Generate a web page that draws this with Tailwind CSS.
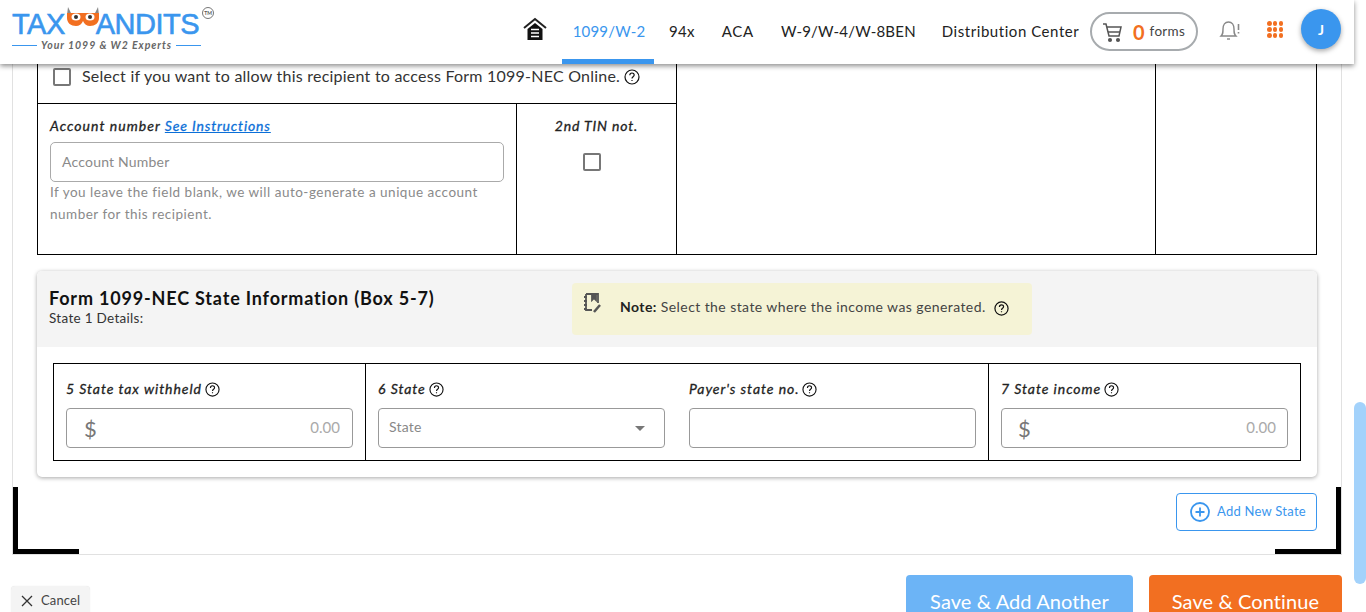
<!doctype html>
<html><head><meta charset="utf-8"><script src="https://cdn.jsdelivr.net/npm/@tailwindcss/browser@4"></script></head>
<body class="m-0 bg-white">
<div class="relative w-[1366px] h-[612px] overflow-hidden bg-white font-['Lato',sans-serif] text-[#222]">
  <!-- header -->
  <header class="absolute top-0 left-0 w-[1354px] h-[64px] bg-white z-10 shadow-[0_2px_5px_rgba(0,0,0,0.45)] flex items-center">
    <div class="relative w-[240px] h-[64px] shrink-0">
      <div class="absolute left-[12px] top-[11px] font-['Liberation_Sans',sans-serif] text-[29px] leading-[26px] text-[#3a96ee] flex tracking-[-0.5px] [-webkit-text-stroke:0.6px_#3a96ee]"><span>TAX</span><span class="w-[31px]"></span><span>ANDITS</span></div>
      <svg class="absolute left-[65px] top-[6px]" width="36" height="22" viewBox="0 0 36 22"><path d="M3 1l3 6h24l3-6 1 8H2z" fill="#888"/><path d="M2 7h32v5c0 5-4 8-9 8-3 0-6-2-7-5-1 3-4 5-7 5-5 0-9-3-9-8z" fill="#f26f21"/><ellipse cx="11" cy="11" rx="4.500" ry="3.500" fill="#fff"/><ellipse cx="25" cy="11" rx="4.500" ry="3.500" fill="#fff"/><circle cx="11" cy="11" r="2" fill="#333"/><circle cx="25" cy="11" r="2" fill="#333"/></svg>
      <div class="absolute left-[202px] top-[7px] w-[12px] h-[12px] rounded-full border border-[#777] text-[5px] leading-[10px] text-center font-bold text-[#555]">TM</div>
      <div class="absolute left-[12px] top-[38px] w-[189px] flex items-center justify-between">
        <span class="h-px w-[25px] bg-[#3a96ee]"></span>
        <span class="text-[10.5px] leading-[14px] italic font-bold tracking-[0.95px] text-[#666] whitespace-nowrap">Your 1099 &amp; W2 Experts</span>
        <span class="h-px w-[25px] bg-[#3a96ee]"></span>
      </div>
    </div>
    <div class="absolute left-[523px] top-[17px]">
      <svg width="24" height="24" viewBox="0 0 24 24"><path d="M1 11L12 2l11 9" fill="none" stroke="#222" stroke-width="2"/><path d="M4.500 12l7.500-6 7.500 6v11h-15z" fill="#111"/><path d="M8 12.500h8M8 16h8M8 19.500h8" stroke="#fff" stroke-width="1.400"/></svg>
    </div>
    <nav class="absolute left-[562px] top-0 h-[64px] flex text-[15px] tracking-[0.2px] whitespace-nowrap">
      <a class="w-[92px] h-[64px] flex items-center justify-center pt-[4px] pl-[2px] text-[#3a96ee] border-b-[5px] border-[#3a96ee]">1099/W-2</a>
      <a class="ml-[15px] h-[64px] flex items-center pb-[1px] tracking-[0.3px]">94x</a>
      <a class="ml-[27px] h-[64px] flex items-center pb-[1px] tracking-[0.7px]">ACA</a>
      <a class="ml-[27px] h-[64px] flex items-center pb-[1px] tracking-[0.2px]">W-9/W-4/W-8BEN</a>
      <a class="ml-[26px] h-[64px] flex items-center pb-[1px] tracking-[0.55px]">Distribution Center</a>
    </nav>
    <div class="absolute left-[1090px] top-[12px] w-[108px] h-[39px] rounded-full border-2 border-[#a7abae] flex items-center pl-[10px]">
      <svg width="22" height="22" viewBox="0 0 22 22" fill="none" stroke="#555" stroke-width="1.500"><path d="M1 3h3l3 12h10l2-9H5"/><path d="M6 11h12" /><circle cx="8" cy="19" r="1.300" fill="#555"/><circle cx="16" cy="19" r="1.300" fill="#555"/></svg>
      <span class="ml-[9px] text-[20px] font-bold text-[#f26f21] leading-none">0</span>
      <span class="ml-[5px] text-[13.500px] text-[#444] tracking-[0.3px]">forms</span>
    </div>
    <svg class="absolute left-[1219px] top-[19px]" width="22" height="22" viewBox="0 0 22 22" fill="none" stroke="#888" stroke-width="1.400"><path d="M2 17c2-2 2-3 2-7s2-7 5.500-7S15 6 15 10s0 5 2 7z"/><path d="M8 20h3"/><path d="M19.500 5v6M19.500 13v1.500" stroke-width="1.600"/></svg>
    <div class="absolute left-[1267px] top-[21px] w-[16px] grid grid-cols-3 gap-[1.500px]">
      <i class="w-[4.500px] h-[4.500px] rounded-full bg-[#f26f21]"></i><i class="w-[4.500px] h-[4.500px] rounded-full bg-[#f26f21]"></i><i class="w-[4.500px] h-[4.500px] rounded-full bg-[#f26f21]"></i>
      <i class="w-[4.500px] h-[4.500px] rounded-full bg-[#f26f21]"></i><i class="w-[4.500px] h-[4.500px] rounded-full bg-[#f26f21]"></i><i class="w-[4.500px] h-[4.500px] rounded-full bg-[#f26f21]"></i>
      <i class="w-[4.500px] h-[4.500px] rounded-full bg-[#f26f21]"></i><i class="w-[4.500px] h-[4.500px] rounded-full bg-[#f26f21]"></i><i class="w-[4.500px] h-[4.500px] rounded-full bg-[#f26f21]"></i>
    </div>
    <div class="absolute left-[1301px] top-[9px] w-[40px] h-[40px] rounded-full bg-[#3a96ee] shadow-[0_2px_5px_rgba(0,0,0,0.35)] text-white text-[14px] font-bold flex items-center justify-center">J</div>
  </header>

  <!-- scrollbar -->
  <div class="absolute left-[1354px] top-[402px] w-[12px] h-[182px] rounded-[6px] bg-[#a3d2fb]"></div>

  <!-- card frame -->
  <main class="absolute left-[12px] top-0 w-[1330px] h-[555px] border-x border-b border-[#e1e1e1] pt-[64px] pl-[24px] pr-[24px]">
    <!-- top table -->
    <div class="grid grid-cols-[640px_478px_162px] h-[191px] border-b border-black">
      <div class="border-x border-black flex flex-col">
        <div class="h-[40px] border-b border-black flex items-center pl-[15px] pb-[13px]">
          <span class="w-[18px] h-[18px] rounded-[2px] border-2 border-[#777] shrink-0"></span>
          <span class="ml-[11px] mb-[2px] text-[16px] tracking-[0.23px] text-[#333] whitespace-nowrap">Select if you want to allow this recipient to access Form 1099-NEC Online.</span>
          <svg class="ml-[4px]" width="16" height="16" viewBox="0 0 16 16" fill="none" stroke="#111" stroke-width="1.200"><circle cx="8" cy="8" r="7"/><path d="M5.800 6.300c0-3 4.400-3 4.400-.2 0 1.700-2.200 1.700-2.200 3.500M8 11v1"/></svg>
        </div>
        <div class="flex-1 flex">
          <div class="w-[479px] border-r border-black pl-[12px] pt-[13px]">
            <div class="text-[14px] leading-[18px] italic tracking-[1.05px] [-webkit-text-stroke:0.3px_#222] text-[#222]">Account number <a class="text-[#0b6fd8] underline tracking-[0.85px] [-webkit-text-stroke:0.3px_#0b6fd8]">See Instructions</a></div>
            <div class="mt-[7px] w-[454px] h-[40px] rounded-[5px] border border-[#aaa] pl-[11px] pb-[2px] flex items-center text-[14px] tracking-[0.2px] text-[#8a8a8a]">Account Number</div>
            <p class="mt-[-1px] w-[440px] text-[13.500px] leading-[22px] tracking-[0.5px] text-[#8a8a8a]">If you leave the field blank, we will auto-generate a unique account number for this recipient.</p>
          </div>
          <div class="flex-1 flex flex-col items-center pt-[13px]">
            <div class="text-[14px] leading-[18px] italic tracking-[0.85px] [-webkit-text-stroke:0.3px_#222] text-[#222]">2nd TIN not.</div>
            <span class="mt-[18px] mr-[9px] w-[18px] h-[18px] rounded-[2px] border-2 border-[#777]"></span>
          </div>
        </div>
      </div>
      <div></div>
      <div class="border-x border-black"></div>
    </div>

    <!-- state card -->
    <section class="mt-[16px] w-[1280px] h-[206px] rounded-[5px] bg-white shadow-[0_1px_4px_rgba(0,0,0,0.35)] overflow-hidden">
      <div class="relative h-[76px] bg-[#f4f4f4] pl-[12px] pt-[16px]">
        <h2 class="text-[18px] leading-[22px] font-bold text-[#111] tracking-[0.82px]">Form 1099-NEC State Information (Box 5-7)</h2>
        <p class="text-[13.500px] leading-[18px] tracking-[0.3px] text-[#333]">State 1 Details:</p>
        <div class="absolute left-[535px] top-[12px] w-[460px] h-[52px] rounded-[4px] bg-[#f5f3d6] flex items-center pl-[48px] pb-[5px] text-[14px] tracking-[0.42px] text-[#444]">
          <svg class="absolute left-[10px] top-[9px]" width="22" height="22" viewBox="0 0 22 22" fill="none" stroke="#555" stroke-width="1.800"><path d="M4 2h12v9M4 2v16h6"/><path d="M2 5h3M2 9h3M2 13h3M2 17h3"/><path d="M10 2v6l2-2 2 2V2" fill="#555"/><path d="M12 20l6-7" stroke-width="2.500"/></svg>
          <b class="font-bold text-[#222]">Note:</b>&nbsp;Select the state where the income was generated.
          <svg class="ml-[8px] mt-[4px]" width="15" height="15" viewBox="0 0 16 16" fill="none" stroke="#111" stroke-width="1.300"><circle cx="8" cy="8" r="7"/><path d="M5.800 6.300c0-3 4.400-3 4.400-.2 0 1.700-2.200 1.700-2.200 3.500M8 11v1"/></svg>
        </div>
      </div>
      <div class="mt-[16px] mx-[16px] h-[98px] border border-black grid grid-cols-[311px_624px_1fr]">
        <div class="pl-[12px] pr-[12px] pt-[16px]">
          <div class="flex items-center gap-[3px] text-[14px] leading-[18px] italic tracking-[0.95px] [-webkit-text-stroke:0.3px_#222] text-[#222]">5 State tax withheld <svg width="15" height="15" viewBox="0 0 16 16" fill="none" stroke="#111" stroke-width="1.200"><circle cx="8" cy="8" r="7"/><path d="M5.800 6.300c0-3 4.400-3 4.400-.2 0 1.700-2.200 1.700-2.200 3.500M8 11v1"/></svg></div>
          <div class="mt-[10px] h-[40px] rounded-[4px] border border-[#999] flex items-center justify-between pl-[17px] pr-[12px]"><span class="text-[22px] text-[#777]">$</span><span class="text-[15px] text-[#aaa] pb-[1px]">0.00</span></div>
        </div>
        <div class="border-x border-black pl-[12px] pr-[12px] pt-[16px] grid grid-cols-[287px_287px] gap-x-[24px]">
          <div>
            <div class="flex items-center gap-[3px] text-[14px] leading-[18px] italic tracking-[0.95px] [-webkit-text-stroke:0.3px_#222] text-[#222]">6 State <svg width="15" height="15" viewBox="0 0 16 16" fill="none" stroke="#111" stroke-width="1.200"><circle cx="8" cy="8" r="7"/><path d="M5.800 6.300c0-3 4.400-3 4.400-.2 0 1.700-2.200 1.700-2.200 3.500M8 11v1"/></svg></div>
            <div class="mt-[10px] h-[40px] rounded-[4px] border border-[#999] flex items-center justify-between pl-[10px] pr-[19px] pb-[3px] text-[14px] tracking-[0.2px] text-[#888]">State<span class="w-0 h-0 border-x-[5px] border-x-transparent border-t-[5px] border-t-[#777] mt-[4px]"></span></div>
          </div>
          <div>
            <div class="flex items-center gap-[3px] text-[14px] leading-[18px] italic tracking-[0.95px] [-webkit-text-stroke:0.3px_#222] text-[#222]">Payer's state no. <svg width="15" height="15" viewBox="0 0 16 16" fill="none" stroke="#111" stroke-width="1.200"><circle cx="8" cy="8" r="7"/><path d="M5.800 6.300c0-3 4.400-3 4.400-.2 0 1.700-2.200 1.700-2.200 3.500M8 11v1"/></svg></div>
            <div class="mt-[10px] h-[40px] rounded-[4px] border border-[#999]"></div>
          </div>
        </div>
        <div class="pl-[12px] pr-[12px] pt-[16px]">
          <div class="flex items-center gap-[3px] text-[14px] leading-[18px] italic tracking-[0.95px] [-webkit-text-stroke:0.3px_#222] text-[#222]">7 State income <svg width="15" height="15" viewBox="0 0 16 16" fill="none" stroke="#111" stroke-width="1.200"><circle cx="8" cy="8" r="7"/><path d="M5.800 6.300c0-3 4.400-3 4.400-.2 0 1.700-2.200 1.700-2.200 3.500M8 11v1"/></svg></div>
          <div class="mt-[10px] h-[40px] rounded-[4px] border border-[#999] flex items-center justify-between pl-[16px] pr-[11px]"><span class="text-[22px] text-[#777]">$</span><span class="text-[15px] text-[#aaa] pb-[1px]">0.00</span></div>
        </div>
      </div>
    </section>

    <div class="mt-[16px] flex justify-end">
      <button class="w-[141px] h-[38px] rounded-[4px] border border-[#3a96ee] flex items-center pl-[13px] text-[13px] tracking-[0.25px] text-[#3a96ee] bg-white">
        <svg width="20" height="20" viewBox="0 0 20 20" fill="none" stroke="#3a96ee" stroke-width="1.800"><circle cx="10" cy="10" r="9"/><path d="M10 5.500v9M5.500 10h9"/></svg>
        <span class="ml-[7px]">Add New State</span>
      </button>
    </div>
    <!-- corner brackets -->
    <span class="absolute left-0 top-[487px] w-[5px] h-[67px] bg-black"></span>
    <span class="absolute left-0 top-[549px] w-[66px] h-[5px] bg-black"></span>
    <span class="absolute right-0 top-[487px] w-[5px] h-[67px] bg-black"></span>
    <span class="absolute right-0 top-[549px] w-[66px] h-[5px] bg-black"></span>
  </main>

  <!-- footer -->
  <div class="absolute left-[11px] top-[575px] w-[1331px] h-[60px] flex items-start">
    <button class="mt-[11px] w-[79px] h-[40px] rounded-[4px] bg-[#f4f4f4] shadow-[0_0_1px_rgba(0,0,0,0.15)] flex items-start pt-[5px] pl-[10px] text-[13px] tracking-[0.15px] text-[#444]">
      <svg class="mt-[4px]" width="12" height="12" viewBox="0 0 12 12" stroke="#333" stroke-width="1.300"><path d="M1 1l10 10M11 1L1 11"/></svg>
      <span class="ml-[8px]">Cancel</span>
    </button>
    <button class="ml-auto w-[227px] h-[50px] rounded-[4px] bg-[#6cb4f6] text-white text-[20px] tracking-[0.1px] pt-[1px]">Save &amp; Add Another</button>
    <button class="ml-[16px] w-[193px] h-[50px] rounded-[4px] bg-[#f26f21] text-white text-[20px] tracking-[0.1px] pt-[1px]">Save &amp; Continue</button>
  </div>
</div>
</body></html>
